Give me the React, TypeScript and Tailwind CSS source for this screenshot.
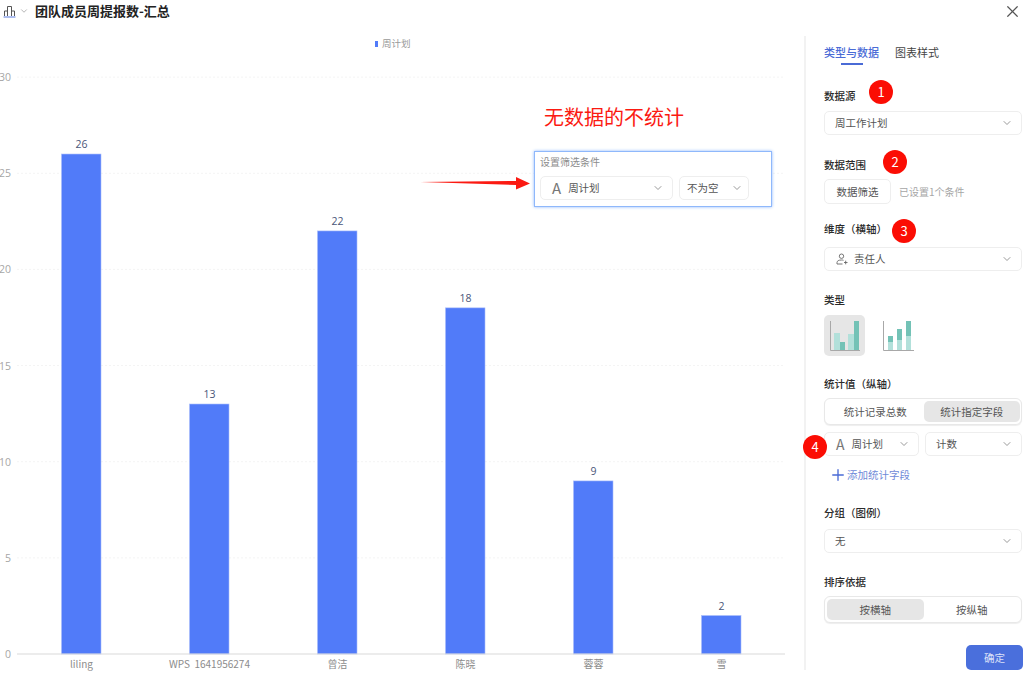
import React from 'react';
import { ChevronDown, Plus, X } from 'lucide-react';

const bars = [
  { name: 'liling', value: 26 },
  { name: 'WPS  1641956274', value: 13 },
  { name: '曾洁', value: 22 },
  { name: '陈晓', value: 18 },
  { name: '蓉蓉', value: 9 },
  { name: '雪', value: 2 },
];

const ticks = [0, 5, 10, 15, 20, 25, 30];
const zeroY = 654;
const unit = 19.23;

const Chevron = () => (
  <ChevronDown size={12} strokeWidth={1.5} className="text-[#777777] shrink-0" />
);

const Label = ({ children, className = '' }: { children: React.ReactNode; className?: string }) => (
  <div className={`text-[10.5px] leading-[14px] font-medium text-[#2b2b2b] ${className}`}>{children}</div>
);

const Select = ({ children, className = '' }: { children: React.ReactNode; className?: string }) => (
  <div className={`flex items-center justify-between h-[24px] rounded-[5px] border border-[#eeeeee] bg-white text-[10.5px] text-[#555555] ${className}`}>
    {children}
  </div>
);

const Badge = ({ n, className }: { n: number; className: string }) => (
  <div className={`absolute w-6 h-6 rounded-full bg-[#fb0d04] text-white text-[13px] flex items-center justify-center ${className}`}>
    {n}
  </div>
);

const Segment = ({ items, active, className = '' }: { items: string[]; active: number; className?: string }) => (
  <div className={`flex h-[27px] p-[2px] pr-[1px] rounded-[6px] border border-[#e8e8e8] bg-white shadow-[0_1px_1px_#eeeeee] ${className}`}>
    {items.map((item, i) => (
      <div
        key={item}
        className={`flex-1 flex items-center justify-center rounded-[5px] text-[10.5px] text-[#555555] ${i === active ? 'bg-[#e6e6e6]' : ''}`}
      >
        {item}
      </div>
    ))}
  </div>
);

const Chart = () => (
  <svg width="804" height="656" viewBox="0 22 804 656" className="block" fontFamily="'Noto Sans CJK SC', sans-serif">
    <rect x="375" y="41" width="3" height="6" fill="#517bf9" />
    <text x="382" y="47" fontSize="9.5" fill="#999999">周计划</text>
    {ticks.map((t) => {
      const y = zeroY - t * unit;
      return (
        <g key={t}>
          {t > 0 && <line x1="17" x2="785" y1={y} y2={y} stroke="#f4f4f4" strokeDasharray="2 2" />}
          <text x="11" y={y + 4} fontSize="10.5" fill="#a6a6a6" textAnchor="end" fontFamily="'Open Sans', sans-serif">{t}</text>
        </g>
      );
    })}
    {bars.map((b, i) => {
      const x = 61.5 + i * 128;
      const h = b.value * unit;
      return (
        <g key={b.name}>
          <rect x={x} y={zeroY - h} width="39.5" height={h} fill="#517bf9" stroke="#a9bdfb" strokeWidth="0.6" />
          <text x={x + 20} y={zeroY - h - 6} fontSize="10.5" fill="#4a5578" textAnchor="middle" fontFamily="'Open Sans', sans-serif">{b.value}</text>
          <text x={x + 20} y="668" fontSize="10" fill="#8c8c8c" textAnchor="middle" xmlSpace="preserve">{b.name}</text>
        </g>
      );
    })}
    <line x1="17" x2="785" y1="654" y2="654" stroke="#d9d9d9" strokeWidth="1.2" />
  </svg>
);

export default function App() {
  return (
    <div className="relative w-[1024px] h-[678px] overflow-hidden bg-white font-['Noto_Sans_CJK_SC','Open_Sans',sans-serif]">
      <header className="flex items-center h-[22px] pl-[3px] pr-[2px]">
        <svg width="13" height="13" viewBox="0 0 13 13" fill="none" stroke="#555555" strokeWidth="1">
          <path d="M1.5 11V6H4.5M4.5 11V1.5H8.5V11M8.5 6H11.5V11" />
          <path d="M0.5 12H12.5" stroke="#5b7de0" />
        </svg>
        <ChevronDown size={10} strokeWidth={1.5} className="ml-[3px] text-[#888888]" />
        <h1 className="ml-[6px] text-[13px] font-bold text-[#222222]">团队成员周提报数-汇总</h1>
        <X size={19} strokeWidth={1.5} className="ml-auto text-[#555555]" />
      </header>

      <main className="flex">
        <Chart />

        <aside className="w-[220px] h-[634px] mt-[14px] border-l-2 border-[#f2f2f2] pl-[18px] pr-[2px] self-start">
          <div className="flex gap-[16px] pt-[8px] text-[11px] leading-[16px]">
            <div className="relative font-medium text-[#4a6bd6]">
              类型与数据
              <div className="absolute left-[17px] top-[19px] w-[22px] h-[2px] bg-[#4a6bd6]" />
            </div>
            <div className="text-[#444444]">图表样式</div>
          </div>

          <Label className="mt-[29px]">数据源</Label>
          <Select className="mt-[8px] pl-[10px] pr-[8px]">
            周工作计划
            <Chevron />
          </Select>

          <Label className="mt-[23px]">数据范围</Label>
          <div className="flex items-center mt-[7px]">
            <div className="flex items-center justify-center w-[67px] h-[25px] rounded-[5px] border border-[#eeeeee] text-[10.5px] text-[#555555]">
              数据筛选
            </div>
            <span className="ml-[8px] text-[10px] text-[#a6a6a6]">已设置1个条件</span>
          </div>

          <Label className="mt-[18px]">维度（横轴）</Label>
          <Select className="mt-[11px] pl-[11px] pr-[8px]">
            <span className="flex items-center gap-[6px]">
              <svg width="12" height="12" viewBox="0 0 12 12" fill="none" stroke="#666666" strokeWidth="0.9">
                <circle cx="5.5" cy="3.2" r="2.2" />
                <path d="M1 11V9.5C1 8 2.5 7 5.5 7C6.3 7 7 7.1 7.5 7.3M1 11H6.5M8 9.5H11.5M9.7 7.7V11.3" />
              </svg>
              责任人
            </span>
            <Chevron />
          </Select>

          <Label className="mt-[22px]">类型</Label>
          <div className="flex items-center mt-[8px] gap-[18px]">
            <div className="flex items-center justify-center w-[41px] h-[41px] rounded-[5px] bg-[#e6e6e6]">
              <svg width="30" height="30" viewBox="0 0 30 30">
                <path d="M0.5 0V29.5H30" fill="none" stroke="#a8a8a8" />
                <rect x="4" y="12" width="6" height="17" fill="#b2e0da" />
                <rect x="10" y="21" width="5" height="8" fill="#73c2b6" />
                <rect x="18" y="13" width="6" height="16" fill="#b2e0da" />
                <rect x="24" y="0" width="5" height="29" fill="#73c2b6" />
              </svg>
            </div>
            <svg width="31" height="30" viewBox="0 0 31 30">
              <path d="M0.5 0V29.5H31" fill="none" stroke="#a8a8a8" />
              <rect x="5" y="15" width="5" height="6" fill="#73c2b6" />
              <rect x="5" y="21" width="5" height="8" fill="#b2e0da" />
              <rect x="14" y="8" width="5" height="11" fill="#73c2b6" />
              <rect x="14" y="19" width="5" height="10" fill="#b2e0da" />
              <rect x="23" y="0" width="5" height="15" fill="#73c2b6" />
              <rect x="23" y="15" width="5" height="14" fill="#b2e0da" />
            </svg>
          </div>

          <Label className="mt-[21px]">统计值（纵轴）</Label>
          <Segment items={['统计记录总数', '统计指定字段']} active={1} className="mt-[7px]" />
          <div className="flex gap-[6px] mt-[7px]">
            <Select className="w-[95px] pl-[11px] pr-[8px]">
              <span className="flex items-center gap-[7px]">
                <span className="text-[14px] text-[#777777]">A</span>
                周计划
              </span>
              <Chevron />
            </Select>
            <Select className="w-[97px] pl-[10px] pr-[8px]">
              计数
              <Chevron />
            </Select>
          </div>
          <div className="flex items-center mt-[12px] ml-[5px] h-[14px] text-[10.5px] text-[#6f8ad8]">
            <Plus size={18} strokeWidth={1.8} className="text-[#4a6bd6]" />
            添加统计字段
          </div>

          <Label className="mt-[24px]">分组（图例）</Label>
          <Select className="mt-[9px] pl-[10px] pr-[8px]">
            无
            <Chevron />
          </Select>

          <Label className="mt-[22px]">排序依据</Label>
          <Segment items={['按横轴', '按纵轴']} active={0} className="mt-[7px]" />

          <div className="flex justify-end mt-[22px] -mr-[1px]">
            <div className="flex items-center justify-center w-[57px] h-[25px] rounded-[5px] bg-[#4a6fdc] text-[10.5px] text-white/80">
              确定
            </div>
          </div>
        </aside>
      </main>

      {/* annotations pasted over the screenshot */}
      <div className="absolute left-[544px] top-[103px] text-[20px] leading-[28px] text-[#fb1a12]">无数据的不统计</div>
      <svg className="absolute left-[418px] top-[174px]" width="112" height="18" viewBox="0 0 112 18">
        <path d="M2 8L98 7V3L112 9.5L98 15.5V11Z" fill="#fb1a12" />
      </svg>
      <div className="absolute left-[534px] top-[151px] w-[238px] h-[56px] bg-white border border-[#8fb8fb] shadow-[0_0_3px_#8fb8fb] px-[5px] pt-[3px]">
        <div className="text-[10px] leading-[14px] text-[#8c8c8c]">设置筛选条件</div>
        <div className="flex gap-[6px] mt-[7px]">
          <Select className="w-[133px] pl-[11px] pr-[8px]">
            <span className="flex items-center gap-[7px]">
              <span className="text-[15px] text-[#777777]">A</span>
              周计划
            </span>
            <Chevron />
          </Select>
          <Select className="w-[70px] pl-[7px] pr-[5px]">
            不为空
            <Chevron />
          </Select>
        </div>
      </div>
      <Badge n={1} className="left-[869px] top-[80px]" />
      <Badge n={2} className="left-[883px] top-[150px]" />
      <Badge n={3} className="left-[892px] top-[219px]" />
      <Badge n={4} className="left-[803px] top-[435px]" />
    </div>
  );
}
